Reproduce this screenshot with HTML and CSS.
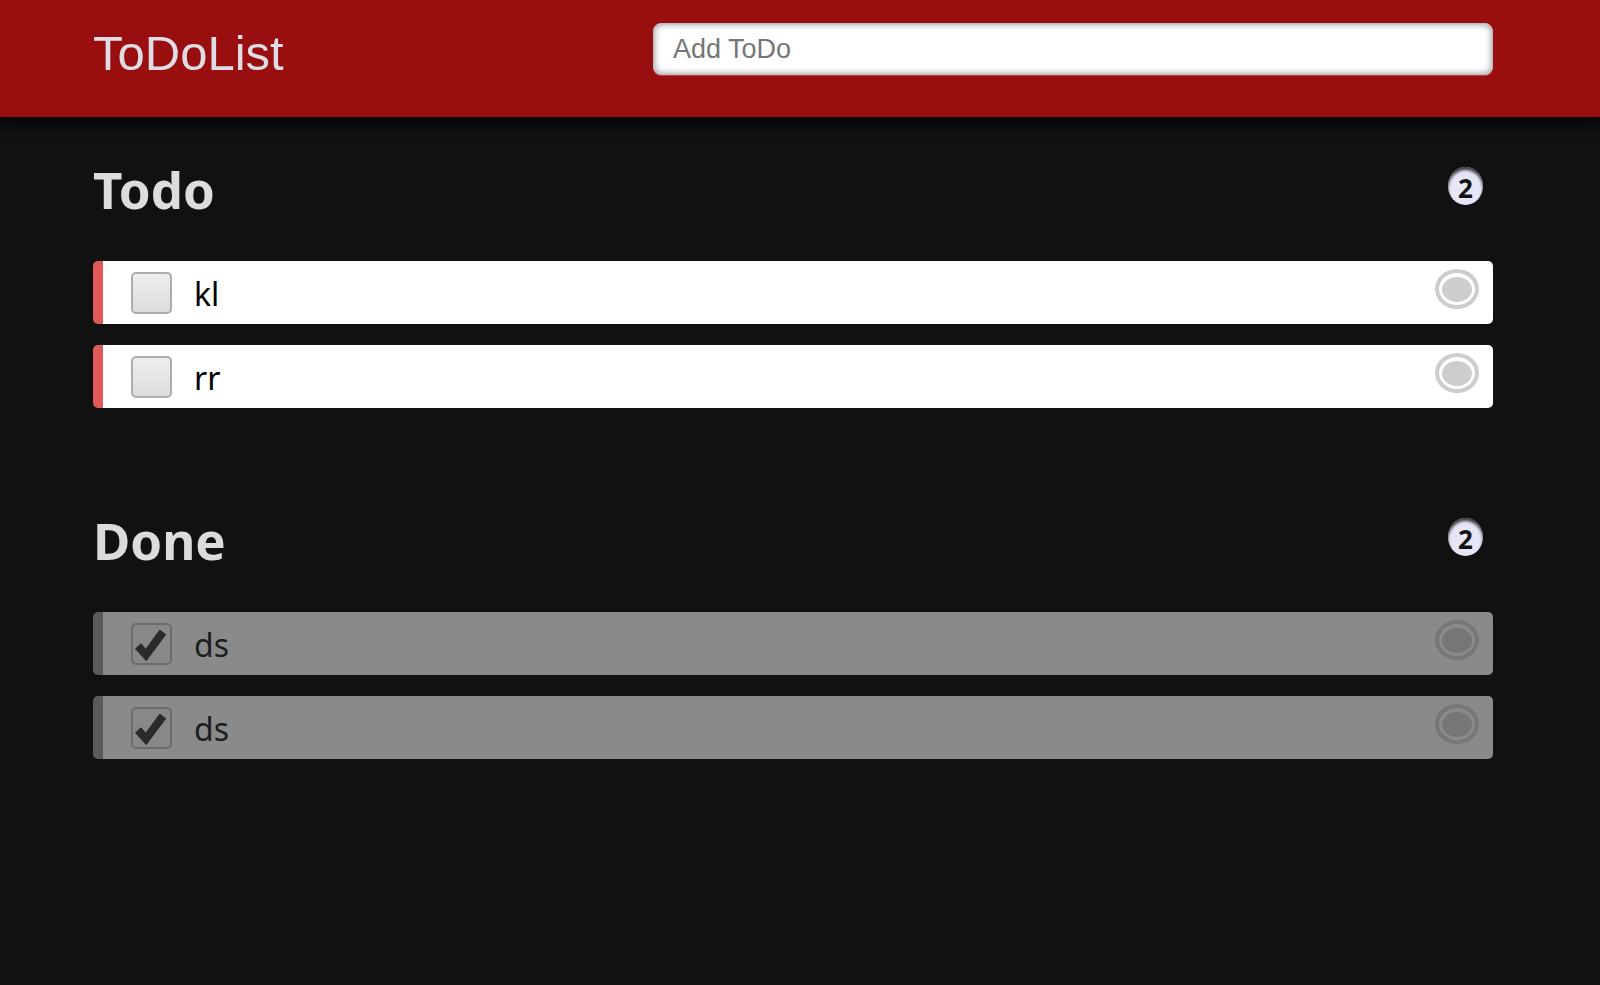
FILE: index.html
```html
<!DOCTYPE html>
<html>
<head>
<meta charset="utf-8">
<title>ToDoList</title>
<link rel="stylesheet" href="styles.css">
</head>
<body>
<header class="topbar">
  <div class="topbar-inner">
    <h1 class="brand">ToDoList</h1>
    <input class="add-input" type="text" placeholder="Add ToDo">
  </div>
</header>
<main class="content">
  <section class="section">
    <div class="section-head">
      <h2 class="section-title">Todo</h2>
      <span class="badge">2</span>
    </div>
    <ul class="list">
      <li class="item">
        <span class="check"></span>
        <span class="label">kl</span>
        <span class="radio"><span class="radio-dot"></span></span>
      </li>
      <li class="item">
        <span class="check"></span>
        <span class="label">rr</span>
        <span class="radio"><span class="radio-dot"></span></span>
      </li>
    </ul>
  </section>
  <section class="section">
    <div class="section-head">
      <h2 class="section-title">Done</h2>
      <span class="badge">2</span>
    </div>
    <ul class="list">
      <li class="item done">
        <span class="check checked"><svg viewBox="0 0 41 41" width="41" height="41"><polyline points="7,23 15,32 32,9" fill="none" stroke="#2a2a2a" stroke-width="8" stroke-linejoin="miter" stroke-linecap="butt"/></svg></span>
        <span class="label">ds</span>
        <span class="radio"><span class="radio-dot"></span></span>
      </li>
      <li class="item done">
        <span class="check checked"><svg viewBox="0 0 41 41" width="41" height="41"><polyline points="7,23 15,32 32,9" fill="none" stroke="#2a2a2a" stroke-width="8" stroke-linejoin="miter" stroke-linecap="butt"/></svg></span>
        <span class="label">ds</span>
        <span class="radio"><span class="radio-dot"></span></span>
      </li>
    </ul>
  </section>
</main>
</body>
</html>
```
FILE: styles.css
```css
* { box-sizing: border-box; }
html, body { margin: 0; padding: 0; }
body {
  background: #111111;
  font-family: "Noto Sans", "Open Sans", sans-serif;
  min-height: 985px;
}
.topbar {
  background: #990e0e;
  height: 117px;
  box-shadow: 0 4px 14px #000;
  position: relative;
}
.topbar-inner {
  width: 1400px;
  margin-left: 93px;
  padding-top: 23px;
  display: flex;
  align-items: flex-start;
  justify-content: space-between;
}
.brand {
  margin: 6px 0 0 0;
  font-family: "Liberation Sans", Arial, sans-serif;
  font-weight: normal;
  font-size: 49px;
  line-height: 48px;
  color: #dedde6;
}
.add-input {
  width: 840px;
  height: 52px;
  border: 1px solid #bbb;
  border-radius: 8px;
  background: #fff;
  box-shadow: inset 0 0 7px rgba(0,0,0,0.45), 0 1px 0 rgba(255,160,160,0.35);
  padding: 0 19px;
  font-family: "Liberation Sans", Arial, sans-serif;
  font-size: 27px;
  color: #333;
  outline: none;
}
.add-input::placeholder { color: #767676; }
.content {
  width: 1400px;
  margin-left: 93px;
  padding-top: 42px;
}
.section { margin-bottom: 102px; }
.section-head {
  display: flex;
  justify-content: space-between;
  align-items: flex-start;
  margin-bottom: 42px;
}
.section-title {
  margin: 0;
  font-size: 51px;
  line-height: 60px;
  font-weight: 700;
  color: #dcdcdc;
}
.badge {
  margin-top: 8px;
  margin-right: 10px;
  width: 35px;
  height: 38px;
  border-radius: 50%;
  background: #e6e6f8;
  box-shadow: inset 0 3px 3px #3a3a3a;
  display: flex;
  align-items: center;
  justify-content: center;
  padding-top: 3px;
  font-size: 26px;
  font-weight: 700;
  color: #111;
}
.list { list-style: none; margin: 0; padding: 0; }
.item {
  height: 63px;
  margin-bottom: 21px;
  background: #fff;
  border-left: 10px solid #e05a5a;
  border-radius: 5px;
  display: flex;
  align-items: center;
}
.check {
  margin-left: 28px;
  width: 41px;
  height: 42px;
  border: 2px solid #acacac;
  border-radius: 5px;
  background: linear-gradient(#eeeeee, #dcdcdc);
  position: relative;
}
.check svg { position: absolute; left: -2px; top: -2px; }
.label {
  margin-left: 22px;
  font-size: 32px;
  color: #000;
  line-height: 1;
  padding-top: 3px;
}
.radio {
  margin-left: auto;
  margin-right: 14px;
  align-self: flex-start;
  margin-top: 8px;
  width: 44px;
  height: 40px;
  border-radius: 50%;
  border: 4px solid #cdcdcd;
  display: flex;
  align-items: center;
  justify-content: center;
}
.radio-dot {
  width: 30px;
  height: 25px;
  border-radius: 50%;
  background: #cdcdcd;
}
.item.done {
  background: #8a8a8a;
  border-left-color: #5a5a5a;
}
.item.done .check {
  background: #888;
  border-color: #6c6c6c;
}
.item.done .label { color: #1e1e1e; }
.item.done .radio { border-color: #777; }
.item.done .radio-dot { background: #767676; }
```
